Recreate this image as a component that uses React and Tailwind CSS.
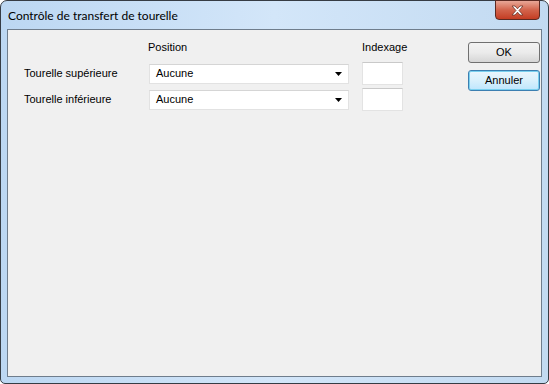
import React from "react";

const body = { fontFamily: '"Liberation Sans", Arial, sans-serif' };

function Combo({ value }) {
  return (
    <div className="flex h-[20px] w-[200px] items-center justify-between border border-[#e2e2e2] border-t-[#d5d5d5] bg-white pl-[6px] pr-[6px] text-[11px] text-black">
      <span>{value}</span>
      <svg width="7" height="4" viewBox="0 0 7 4">
        <path d="M0 0h7L3.5 4z" fill="#000" />
      </svg>
    </div>
  );
}

function IndexBox() {
  return <div className="h-[23px] w-[41px] border border-[#e3e3e3] border-t-[#c9c9c9] bg-white" />;
}

function FormRow({ label, value }) {
  return (
    <div className="flex h-[23px] items-center">
      <div className="w-[125px] text-[11px] text-black">{label}</div>
      <Combo value={value} />
      <div className="ml-[13px]">
        <IndexBox />
      </div>
    </div>
  );
}

export default function App() {
  return (
    <div className="h-[384px] w-[549px] bg-white" style={body}>
      <div className="flex h-full flex-col rounded-t-[7px] rounded-b-[5px] border border-[#363c44] bg-gradient-to-r from-[#bcd7f2] via-[#d3e6f9] to-[#c2daf1] px-[6px] pb-[6px]">
        {/* Title bar */}
        <div className="flex h-[28px] items-start justify-between">
          <div
            className="pl-[1px] pt-[6px] text-[12px] text-black"
            style={{ fontFamily: 'Lato, "Noto Sans", sans-serif' }}
          >
            Contrôle de transfert de tourelle
          </div>
          <div className="-mt-[1px] mr-[2px] flex h-[20px] w-[45px] items-center justify-center rounded-b-[4px] border border-[#5c2a22] bg-gradient-to-b from-[#e8a797] via-[#d2634b] to-[#c43c22]">
            <svg width="13" height="11" viewBox="0 0 13 11">
              <path
                d="M1 1h3l2.5 2.8L9 1h3L8 5.5 12 10H9L6.5 7.2 4 10H1l4-4.5z"
                fill="#fff"
                stroke="#6b3428"
                strokeWidth="0.8"
              />
            </svg>
          </div>
        </div>

        {/* Client area */}
        <div className="flex flex-1 border border-[#6f7d8c] bg-[#f0f0f0]">
          <div className="flex-1 pl-[16px] pt-[11px]">
            <div className="flex h-[13px] items-center text-[11px] text-black">
              <div className="w-[124px]" />
              <div className="w-[214px]">Position</div>
              <div>Indexage</div>
            </div>
            <div className="mt-[8px] flex flex-col gap-[3px]">
              <FormRow label="Tourelle supérieure" value="Aucune" />
              <FormRow label="Tourelle inférieure" value="Aucune" />
            </div>
          </div>
          <div className="flex flex-col gap-[7px] pr-[1px] pt-[12px]">
            <button className="h-[21px] w-[72px] rounded-[3px] border border-[#707070] bg-gradient-to-b from-[#f3f3f3] via-[#ebebeb] to-[#d6d6d6] text-[11px] text-black">
              OK
            </button>
            <button className="h-[21px] w-[72px] rounded-[3px] border border-[#3c7fb1] bg-gradient-to-b from-[#eaf6fd] via-[#d9f0fc] to-[#bee6fd] text-[11px] text-black shadow-[inset_0_0_0_1px_#7ad0ef]">
              Annuler
            </button>
          </div>
        </div>
      </div>
    </div>
  );
}
